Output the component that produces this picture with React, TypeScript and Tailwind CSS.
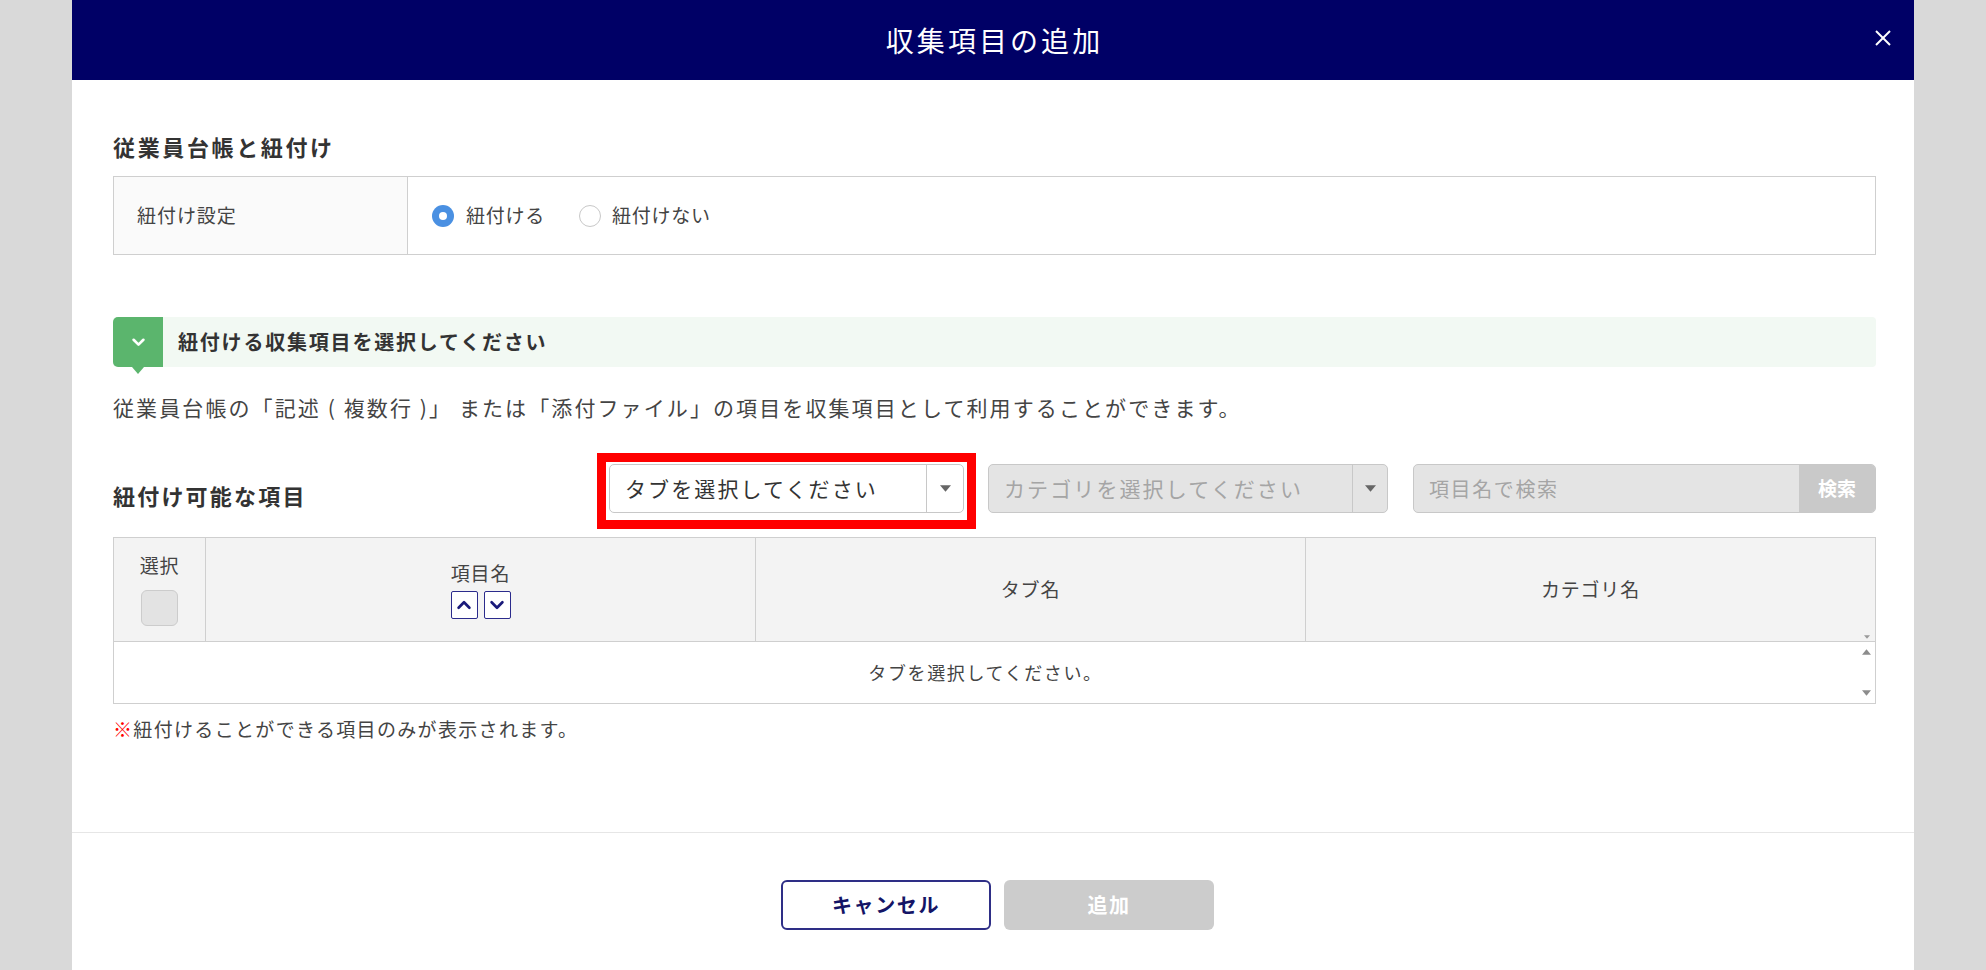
import React from "react";

function Tri({ up = false, className = "" }: { up?: boolean; className?: string }) {
  return (
    <svg viewBox="0 0 10 6" className={className}>
      {up ? <polygon points="0,6 10,6 5,0" fill="currentColor" /> : <polygon points="0,0 10,0 5,6" fill="currentColor" />}
    </svg>
  );
}

function SortBtn({ up }: { up: boolean }) {
  return (
    <div className="w-[27px] h-[28px] border-[1.5px] border-[#2b2b8c] rounded-[2px] bg-white flex items-center justify-center">
      <svg viewBox="0 0 20 20" className="w-[18px] h-[18px]">
        <polyline
          points={up ? "4,13 10,7 16,13" : "4,7 10,13 16,7"}
          fill="none"
          stroke="#1a1a7a"
          strokeWidth="3"
          strokeLinecap="round"
          strokeLinejoin="round"
        />
      </svg>
    </div>
  );
}

export default function App() {
  return (
    <div className="w-[1986px] h-[970px] overflow-hidden bg-[#d9d9d9] flex justify-center font-['Noto_Sans_CJK_JP','Noto_Sans',sans-serif] text-[#333]">
      <div className="w-[1842px] h-full bg-white flex flex-col">
        {/* Header */}
        <div className="relative h-[80px] shrink-0 bg-[#000066] flex items-center justify-center">
          <h1 className="text-[28px] tracking-[0.11em] text-white font-normal leading-none pl-[3px]">収集項目の追加</h1>
          <button className="absolute right-[22px] top-[29px] w-[18px] h-[18px]">
            <svg viewBox="0 0 18 18" className="w-[18px] h-[18px]">
              <line x1="2" y1="2" x2="16" y2="16" stroke="white" strokeWidth="2" />
              <line x1="16" y1="2" x2="2" y2="16" stroke="white" strokeWidth="2" />
            </svg>
          </button>
        </div>

        {/* Content */}
        <div className="pl-[41px] pr-[38px]">
          <h2 className="mt-[49px] h-[34px] leading-[34px] text-[22px] font-bold tracking-[0.12em]">従業員台帳と紐付け</h2>

          <div className="mt-[13px] h-[79px] flex border border-[#cfcfcf]">
            <div className="w-[294px] bg-[#fafafa] border-r border-[#cfcfcf] pl-[23px] flex items-center text-[19px] tracking-[0.05em] text-[#444]">
              紐付け設定
            </div>
            <div className="flex-1 pl-[24px] flex items-center text-[19px] tracking-[0.04em] text-[#444]">
              <span className="w-[22px] h-[22px] rounded-full bg-[#4a90e2] flex items-center justify-center">
                <span className="w-[8px] h-[8px] rounded-full bg-white" />
              </span>
              <span className="ml-[12px]">紐付ける</span>
              <span className="ml-[34px] w-[22px] h-[22px] rounded-full border border-[#c8c8c8] bg-white" />
              <span className="ml-[11px]">紐付けない</span>
            </div>
          </div>

          <div className="mt-[62px] h-[50px] flex bg-[#f2f9f3] rounded-[4px]">
            <div className="relative w-[50px] h-[50px] bg-[#5bb56d] rounded-l-[5px] flex items-center justify-center">
              <svg viewBox="0 0 12 8" className="w-[13px] h-[9px]">
                <polyline points="1.5,1.5 6,6 10.5,1.5" fill="none" stroke="white" strokeWidth="2.4" strokeLinecap="round" strokeLinejoin="round" />
              </svg>
              <span className="absolute left-[19px] top-[50px] w-0 h-0 border-l-[6px] border-r-[6px] border-t-[7px] border-l-transparent border-r-transparent border-t-[#5bb56d]" />
            </div>
            <div className="pl-[15px] flex items-center text-[20px] font-bold tracking-[0.09em] text-[#333]">
              紐付ける収集項目を選択してください
            </div>
          </div>

          <p className="mt-[25px] h-[30px] leading-[30px] text-[21px] tracking-[0.1em] text-[#444]">
            従業員台帳の「記述 ( 複数行 )」 または「添付ファイル」の項目を収集項目として利用することができます。
          </p>

          <div className="mt-[31px] h-[76px] flex justify-between">
            <h2 className="mt-[25px] h-[34px] leading-[34px] text-[22px] font-bold tracking-[0.1em]">紐付け可能な項目</h2>
            <div className="flex items-start">
              <div className="border-[9px] border-[#ff0000] pt-[2px] pb-[7px] px-[3px] bg-white">
                <div className="w-[355px] h-[49px] rounded-[5px] border border-[#c8c8c8] bg-white flex">
                  <div className="flex-1 pl-[15px] flex items-center text-[21px] tracking-[0.1em] text-[#333]">タブを選択してください</div>
                  <div className="w-[37px] border-l border-[#c8c8c8] flex items-center justify-center text-[#666]">
                    <Tri className="w-[11px] h-[7px]" />
                  </div>
                </div>
              </div>
              <div className="ml-[12px] mt-[11px] w-[400px] h-[49px] rounded-[5px] border border-[#c8c8c8] bg-[#e4e4e4] flex">
                <div className="flex-1 pl-[15px] flex items-center text-[21px] tracking-[0.1em] text-[#a5a5a5]">カテゴリを選択してください</div>
                <div className="w-[35px] border-l border-[#c8c8c8] flex items-center justify-center text-[#666]">
                  <Tri className="w-[11px] h-[7px]" />
                </div>
              </div>
              <div className="ml-[25px] mt-[11px] w-[463px] h-[49px] rounded-[5px] border border-[#c8c8c8] bg-[#e4e4e4] flex overflow-hidden">
                <div className="flex-1 pl-[15px] flex items-center text-[20px] tracking-[0.08em] text-[#a5a5a5]">項目名で検索</div>
                <div className="w-[76px] bg-[#c9c9c9] flex items-center justify-center text-[19px] font-bold text-white">検索</div>
              </div>
            </div>
          </div>

          {/* Table */}
          <div className="mt-[8px] border border-[#cfcfcf]">
            <div className="h-[104px] flex bg-[#f3f3f3] border-b border-[#cfcfcf] text-[19px] tracking-[0.04em] text-[#444]">
              <div className="w-[92px] border-r border-[#cfcfcf] flex flex-col items-center justify-center">
                <span className="leading-[26px] mt-[-2px]">選択</span>
                <span className="mt-[12px] w-[37px] h-[36px] rounded-[6px] border border-[#cccccc] bg-[#e3e3e3]" />
              </div>
              <div className="w-[550px] border-r border-[#cfcfcf] flex flex-col items-center justify-center">
                <span className="leading-[26px]">項目名</span>
                <div className="mt-[5px] flex gap-[6px]">
                  <SortBtn up={true} />
                  <SortBtn up={false} />
                </div>
              </div>
              <div className="w-[550px] border-r border-[#cfcfcf] flex items-center justify-center">タブ名</div>
              <div className="relative flex-1 flex items-center justify-center">
                カテゴリ名
                <span className="absolute right-[5px] bottom-[2px] text-[#9a9a9a]">
                  <Tri className="w-[6px] h-[4px]" />
                </span>
              </div>
            </div>
            <div className="h-[61px] flex">
              <div className="flex-1 flex items-center justify-center text-[18px] tracking-[0.09em] text-[#444]">タブを選択してください。</div>
              <div className="w-[18px] flex flex-col items-center justify-between py-[6px] text-[#8c8c8c]">
                <Tri up={true} className="w-[9px] h-[8px]" />
                <Tri className="w-[9px] h-[8px]" />
              </div>
            </div>
          </div>

          <p className="mt-[11px] h-[28px] leading-[28px] text-[19px] tracking-[0.07em] text-[#444]">
            <span className="text-[#ff0000]">※</span>紐付けることができる項目のみが表示されます。
          </p>
        </div>

        {/* Footer */}
        <div className="mt-[89px] border-t border-[#e6e6e6] pt-[47px] pl-[9px] flex justify-center gap-[13px]">
          <button className="w-[210px] h-[50px] rounded-[6px] border-2 border-[#2e2e86] bg-white text-[20px] font-bold tracking-[0.08em] text-[#141466]">
            キャンセル
          </button>
          <button className="w-[210px] h-[50px] rounded-[6px] bg-[#cccccc] text-[20px] font-bold tracking-[0.08em] text-white">
            追加
          </button>
        </div>
      </div>
    </div>
  );
}
